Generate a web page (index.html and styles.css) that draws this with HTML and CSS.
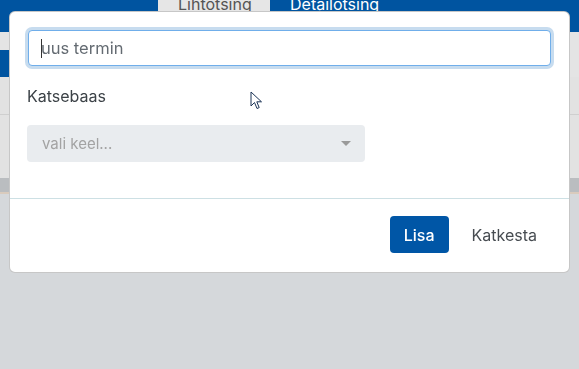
FILE: index.html
```html
<!DOCTYPE html>
<html lang="et">
<head>
<meta charset="utf-8"/>
<meta content="width=device-width, initial-scale=1" name="viewport"/>
<title>Uus termin</title>
<link rel="stylesheet" href="styles.css">
</head>
<body>
<div class="page">
  <div class="topbar">
    <div class="tabs">
      <span class="tab">Lihtotsing</span>
      <span class="tab active">Detailotsing</span>
    </div>
  </div>
  <div class="subbar"></div>
  <div class="toolbar"><div class="toolbar-btn"></div></div>
  <div class="content"><div class="content-row"></div></div>
  <div class="footer-band"></div>
</div>

<div class="modal">
  <div class="modal-body">
    <div class="term-field">
      <input class="term-input" type="text" placeholder="uus termin"/>
    </div>
    <label class="field-label">Katsebaas</label>
    <div class="lang-select">
      <span>vali keel...</span>
      <span class="caret"></span>
    </div>
  </div>
  <div class="modal-footer">
    <button class="btn-primary">Lisa</button>
    <button class="btn-link">Katkesta</button>
  </div>
</div>

<svg class="cursor" width="14" height="20" viewBox="0 0 14 20">
  <path d="M1 1 L1 15 L4.5 11.5 L7 17.5 L9.2 16.6 L6.8 10.8 L11.5 10.8 Z" fill="#fff" stroke="#1d3557" stroke-width="1"/>
</svg>
</body>
</html>
```

FILE: styles.css
```css
body {
  margin: 0;
  width: 579px;
  height: 369px;
  overflow: hidden;
  background: #d5d8db;
  font-family: Inter, "Noto Sans", sans-serif;
}
.page {
  display: flex;
  flex-direction: column;
}
.topbar {
  height: 32px;
  background: #0054a0;
  overflow: hidden;
}
.tabs {
  display: flex;
  margin-left: 158px;
  margin-top: -5px;
}
.tab {
  display: block;
  height: 38px;
  padding: 0 20px;
  line-height: 18px;
  font-size: 16px;
  color: #fff;
}
.tab:first-child {
  width: 72px;
  background: #e6e6e6;
  color: #555;
}
.subbar {
  height: 18px;
  background: #e4e4e4;
}
.toolbar {
  height: 27px;
  background: #e4e4e4;
}
.toolbar-btn {
  width: 200px;
  height: 100%;
  background: #0054a0;
}
.content {
  height: 101px;
  background: #e2e2e2;
}
.content-row {
  height: 37px;
  border-bottom: 1px solid #cfcfcf;
}
.footer-band {
  height: 14px;
  background: #babdc0;
  border-bottom: 2px solid #d9cbbd;
}

.modal {
  position: fixed;
  top: 11px;
  left: 9px;
  width: 559px;
  height: 260px;
  background: #fff;
  border: 1px solid rgba(0,0,0,0.22);
  border-radius: 6px;
  display: flex;
  flex-direction: column;
}
.modal-body {
  padding: 18px 18px 0 17px;
  height: 168px;
  border-bottom: 1px solid #cde0e4;
}
.term-field {
  position: relative;
  margin-left: 1px;
}
.term-field::before {
  content: "";
  position: absolute;
  left: 13px;
  top: 9px;
  width: 1px;
  height: 19px;
  background: #333;
}
.term-input {
  box-sizing: border-box;
  width: 100%;
  height: 36px;
  padding: 0 12px;
  border: 1px solid #70aeea;
  border-radius: 4px;
  box-shadow: 0 0 0 3px #c7dcef;
  font-family: inherit;
  font-size: 16.5px;
  outline: none;
}
.term-input::placeholder {
  color: #646b72;
}
.field-label {
  display: block;
  margin: 19px 0 18px;
  line-height: 22px;
  font-size: 16px;
  color: #3c4247;
}
.lang-select {
  width: 338px;
  height: 37px;
  box-sizing: border-box;
  padding: 0 14px 0 15px;
  background: #e9ecef;
  border-radius: 4px;
  display: flex;
  align-items: center;
  justify-content: space-between;
  font-size: 15px;
  color: #a3a3a3;
}
.caret {
  width: 0;
  height: 0;
  border-left: 5px solid transparent;
  border-right: 5px solid transparent;
  border-top: 5px solid #9a9a9a;
}
.modal-footer {
  display: flex;
  justify-content: flex-end;
  align-items: center;
  gap: 9px;
  padding: 17px 18px 0;
}
.btn-primary {
  height: 37px;
  padding: 0 14px;
  background: #0056a6;
  color: white;
  border: none;
  border-radius: 4px;
  font-family: inherit;
  font-size: 16px;
  font-weight: 500;
}
.btn-link {
  height: 37px;
  padding: 0 14px;
  background: none;
  border: none;
  color: #474c51;
  font-family: inherit;
  font-size: 16px;
}
.cursor {
  position: fixed;
  left: 250px;
  top: 91px;
}
```
